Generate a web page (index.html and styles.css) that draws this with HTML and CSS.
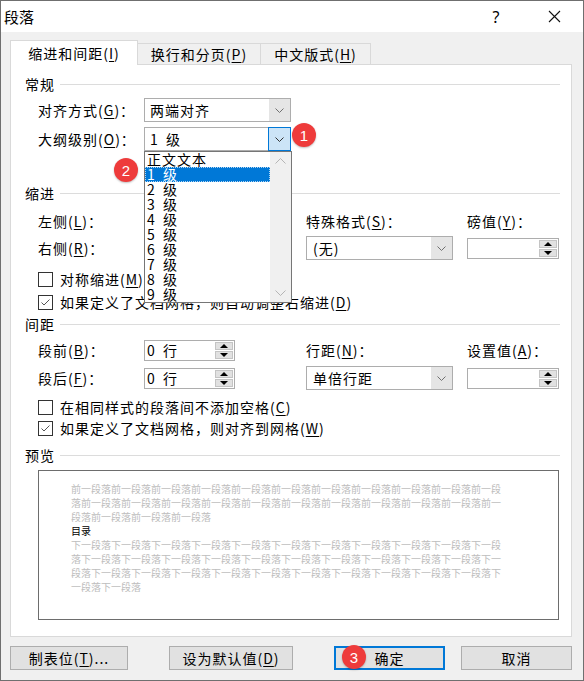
FILE: index.html
```html
<!DOCTYPE html>
<html lang="zh-CN">
<head>
  <meta charset="UTF-8" />
  <meta name="viewport" content="width=device-width, initial-scale=1.0"/>
  <title>段落</title>
  <link rel="stylesheet" href="styles.css">
</head>
<body>

  <div class="dialog">
    <div class="titlebar">
      <span class="title">段落</span>
      <span class="caption-btn help">?</span>
      <span class="caption-btn">
        <svg width="13" height="13" viewBox="0 0 13 13"><path d="M1 1L12 12M12 1L1 12" stroke="#111" stroke-width="1.1" fill="none"/></svg>
      </span>
    </div>

    <div class="tabs">
      <div class="tab tab-active tab-indent">缩进和间距(<u>I</u>)</div>
      <div class="tab tab-break">换行和分页(<u>P</u>)</div>
      <div class="tab tab-cjk">中文版式(<u>H</u>)</div>
    </div>

    <div class="panel">
      <!-- 常规 -->
      <div class="heading">常规</div>
      <div class="row row-first">
        <span class="label">对齐方式(<u>G</u>)：</span>
        <div class="select">
          <span class="select-value">两端对齐</span>
          <span class="select-btn"><svg width="9" height="5" viewBox="0 0 9 5"><path d="M0.5 0.5L4.5 4.5L8.5 0.5" stroke="#707070" fill="none"/></svg></span>
        </div>
      </div>
      <div class="row row-outline">
        <span class="label">大纲级别(<u>O</u>)：</span>
        <div class="select select-open">
          <span class="select-value"><span class="num">1</span>级</span>
          <span class="select-btn"><svg width="9" height="5" viewBox="0 0 9 5"><path d="M0.5 0.5L4.5 4.5L8.5 0.5" stroke="#333" fill="none"/></svg></span>
          <span class="badge badge-one">1</span>
          <span class="badge badge-two">2</span>
          <div class="listbox">
            <div class="list-items">
              <div class="list-item">正文文本</div>
              <div class="list-item selected"><span class="num">1</span>级</div>
              <div class="list-item"><span class="num">2</span>级</div>
              <div class="list-item"><span class="num">3</span>级</div>
              <div class="list-item"><span class="num">4</span>级</div>
              <div class="list-item"><span class="num">5</span>级</div>
              <div class="list-item"><span class="num">6</span>级</div>
              <div class="list-item"><span class="num">7</span>级</div>
              <div class="list-item"><span class="num">8</span>级</div>
              <div class="list-item"><span class="num">9</span>级</div>
            </div>
            <div class="list-scroll">
              <svg width="11" height="6" viewBox="0 0 11 6"><path d="M0.5 5.5L5.5 0.5L10.5 5.5" stroke="#b5b5b5" fill="none"/></svg>
              <svg width="11" height="6" viewBox="0 0 11 6"><path d="M0.5 0.5L5.5 5.5L10.5 0.5" stroke="#b5b5b5" fill="none"/></svg>
            </div>
          </div>
        </div>
      </div>

      <!-- 缩进 -->
      <div class="heading heading-indent">缩进</div>
      <div class="row row-left">
        <span class="label">左侧(<u>L</u>)：</span>
        <div class="spin spin-small">
          <span class="spin-value"></span>
          <span class="spin-btns"><span class="spin-up"></span><span class="spin-down"></span></span>
        </div>
        <span class="label label-right">特殊格式(<u>S</u>)：</span>
        <span class="label label-right">磅值(<u>Y</u>)：</span>
      </div>
      <div class="row row-right">
        <span class="label">右侧(<u>R</u>)：</span>
        <div class="spin spin-small">
          <span class="spin-value"></span>
          <span class="spin-btns"><span class="spin-up"></span><span class="spin-down"></span></span>
        </div>
        <div class="select select-wide">
          <span class="select-value select-value-pad">(无)</span>
          <span class="select-btn"><svg width="9" height="5" viewBox="0 0 9 5"><path d="M0.5 0.5L4.5 4.5L8.5 0.5" stroke="#707070" fill="none"/></svg></span>
        </div>
        <div class="spin spin-wide">
          <span class="spin-value"></span>
          <span class="spin-btns"><span class="spin-up"></span><span class="spin-down"></span></span>
        </div>
      </div>
      <div class="check-row check-mirror">
        <span class="checkbox"></span>
        <span>对称缩进(<u>M</u>)</span>
      </div>
      <div class="check-row check-grid">
        <span class="checkbox"><svg width="13" height="13" viewBox="0 0 13 13"><path d="M2.5 6.5L5 9L10.5 3.5" stroke="#555" fill="none"/></svg></span>
        <span>如果定义了文档网格，则自动调整右缩进(<u>D</u>)</span>
      </div>

      <!-- 间距 -->
      <div class="heading heading-spacing">间距</div>
      <div class="row row-before">
        <span class="label">段前(<u>B</u>)：</span>
        <div class="spin spin-small">
          <span class="spin-value"><span class="num">0</span>行</span>
          <span class="spin-btns"><span class="spin-up"></span><span class="spin-down"></span></span>
        </div>
        <span class="label label-right">行距(<u>N</u>)：</span>
        <span class="label label-right">设置值(<u>A</u>)：</span>
      </div>
      <div class="row row-after">
        <span class="label">段后(<u>F</u>)：</span>
        <div class="spin spin-small">
          <span class="spin-value"><span class="num">0</span>行</span>
          <span class="spin-btns"><span class="spin-up"></span><span class="spin-down"></span></span>
        </div>
        <div class="select select-wide">
          <span class="select-value select-value-pad">单倍行距</span>
          <span class="select-btn"><svg width="9" height="5" viewBox="0 0 9 5"><path d="M0.5 0.5L4.5 4.5L8.5 0.5" stroke="#707070" fill="none"/></svg></span>
        </div>
        <div class="spin spin-wide">
          <span class="spin-value"></span>
          <span class="spin-btns"><span class="spin-up"></span><span class="spin-down"></span></span>
        </div>
      </div>
      <div class="check-row check-same">
        <span class="checkbox"></span>
        <span>在相同样式的段落间不添加空格(<u>C</u>)</span>
      </div>
      <div class="check-row check-snap">
        <span class="checkbox"><svg width="13" height="13" viewBox="0 0 13 13"><path d="M2.5 6.5L5 9L10.5 3.5" stroke="#555" fill="none"/></svg></span>
        <span>如果定义了文档网格，则对齐到网格(<u>W</u>)</span>
      </div>

      <!-- 预览 -->
      <div class="heading heading-preview">预览</div>
      <div class="preview">
        <div class="preview-text">
          <p class="preview-other">前一段落前一段落前一段落前一段落前一段落前一段落前一段落前一段落前一段落前一段落前一段落前一段落前一段落前一段落前一段落前一段落前一段落前一段落前一段落前一段落前一段落前一段落前一段落前一段落前一段落</p>
          <p class="preview-current">目录</p>
          <p class="preview-other">下一段落下一段落下一段落下一段落下一段落下一段落下一段落下一段落下一段落下一段落下一段落下一段落下一段落下一段落下一段落下一段落下一段落下一段落下一段落下一段落下一段落下一段落下一段落下一段落下一段落下一段落下一段落下一段落下一段落下一段落下一段落下一段落下一段落下一段落</p>
        </div>
      </div>
    </div>

    <div class="buttons">
      <div class="btn btn-tabs">制表位(<u>T</u>)...</div>
      <div class="btn btn-default">设为默认值(<u>D</u>)</div>
      <div class="btn btn-ok">确定<span class="badge badge-three">3</span></div>
      <div class="btn btn-cancel">取消</div>
    </div>
  </div>

</body>
</html>
```

FILE: styles.css
```css
* {
  box-sizing: border-box;
}

body {
  margin: 0;
  background: #fff;
  font-family: "Noto Sans CJK SC", "Noto Sans", sans-serif;
  font-size: 14px;
  letter-spacing: 1px;
  color: #000;
}

u {
  text-decoration: underline;
  text-underline-offset: 2px;
}

.dialog {
  width: 584px;
  height: 681px;
  border: 1px solid #6f6f6f;
  background: #f0f0f0;
}

/* title bar */
.titlebar {
  height: 31px;
  background: #fff;
  display: flex;
  align-items: center;
  padding-left: 3px;
}

.title {
  flex: 1;
  font-size: 15px;
  letter-spacing: 0;
}

.caption-btn {
  width: 58px;
  height: 31px;
  display: flex;
  align-items: center;
  justify-content: center;
}

.help {
  font-family: "Noto Sans", sans-serif;
  font-size: 16px;
  letter-spacing: 0;
}

/* tabs */
.tabs {
  height: 32px;
  display: flex;
  align-items: flex-end;
  padding-left: 9px;
}

.tab {
  height: 21px;
  border: 1px solid #d9d9d9;
  border-bottom: none;
  background: #f0f0f0;
  display: flex;
  align-items: center;
  justify-content: center;
  margin-left: -1px;
}

.tab-active {
  height: 25px;
  margin-left: 0;
  margin-bottom: -1px;
  background: #fff;
  position: relative;
  z-index: 1;
}

.tab-indent { width: 128px; }
.tab-break { width: 124px; }
.tab-cjk { width: 111px; }

/* panel */
.panel {
  position: relative;
  width: 562px;
  height: 573px;
  margin-left: 9px;
  background: #fff;
  border: 1px solid #d9d9d9;
  padding: 9px 11px 0 14px;
}

.heading {
  display: flex;
  align-items: center;
  height: 20px;
}

.heading::after {
  content: "";
  flex: 1;
  height: 1px;
  margin-left: 5px;
  background: #dcdcdc;
}

.heading-indent { margin-top: 32px; }
.heading-spacing { margin-top: 3px; }
.heading-preview { margin-top: 8px; }

.row {
  display: grid;
  grid-template-columns: 106px 162px 161px 92px;
  align-items: center;
  height: 24px;
  padding-left: 13px;
}

.row-first { margin-top: 4px; }
.row-outline { margin-top: 5px; }
.row-left { margin-top: 6px; }
.row-right { margin-top: 3px; }
.row-before { margin-top: 4px; }
.row-after { margin-top: 4px; }

.label {
  white-space: nowrap;
}

.num {
  display: inline-block;
  width: 16px;
  letter-spacing: 0;
}

/* combo boxes */
.select {
  position: relative;
  width: 147px;
  height: 24px;
  border: 1px solid #adadad;
  background: #fff;
  display: flex;
  align-items: center;
}

.select-value {
  flex: 1;
  padding-left: 5px;
  white-space: nowrap;
}

.select-value-pad {
  padding-left: 6px;
}

.select-btn {
  width: 21px;
  height: 100%;
  background: #e5e5e5;
  display: flex;
  align-items: center;
  justify-content: center;
}

.select-open .select-btn {
  background: #cce4f7;
  box-shadow: 0 0 0 1px #0078d7;
}

.listbox {
  position: absolute;
  top: calc(100% + 1px);
  left: -1px;
  width: 148px;
  height: 152px;
  border: 1px solid #767676;
  background: #fff;
  display: flex;
  z-index: 5;
}

.list-items {
  flex: 1;
}

.list-item {
  height: 15px;
  line-height: 15px;
  padding-left: 2px;
  white-space: nowrap;
}

.list-item.selected {
  background: #0078d7;
  color: #fff;
  outline: 1px dotted rgba(255, 255, 255, 0.7);
  outline-offset: -1px;
}

.list-scroll {
  width: 21px;
  background: #f0f0f0;
  display: flex;
  flex-direction: column;
  justify-content: space-between;
  align-items: center;
  padding: 6px 0 6px;
}

/* spin boxes */
.spin {
  height: 21px;
  border: 1px solid #adadad;
  background: #fff;
  display: flex;
}

.spin-small { width: 91px; }
.spin-wide { width: 92px; }

.spin-value {
  flex: 1;
  padding-left: 2px;
  line-height: 19px;
  white-space: nowrap;
}

.spin-btns {
  width: 19px;
  display: flex;
  flex-direction: column;
  padding: 1px 1px 1px 0;
  gap: 1px;
}

.spin-up,
.spin-down {
  flex: 1;
  background: #e1e1e1;
  border: 1px solid #c4c4c4;
  position: relative;
}

.spin-up::after,
.spin-down::after {
  content: "";
  position: absolute;
  left: 50%;
  top: 50%;
  margin-left: -4px;
  border-left: 4px solid transparent;
  border-right: 4px solid transparent;
}

.spin-up::after {
  margin-top: -2px;
  border-bottom: 4px solid #000;
}

.spin-down::after {
  margin-top: -2px;
  border-top: 4px solid #000;
}

/* check boxes */
.check-row {
  display: flex;
  align-items: center;
  height: 18px;
  padding-left: 13px;
  white-space: nowrap;
}

.check-mirror { margin-top: 10px; }
.check-grid { margin-top: 5px; }
.check-same { margin-top: 8px; }
.check-snap { margin-top: 3px; }

.checkbox {
  width: 15px;
  height: 15px;
  border: 1px solid #333;
  background: #fff;
  margin-right: 7px;
  display: flex;
}

/* preview */
.preview {
  width: 521px;
  height: 150px;
  margin: 5px 0 0 13px;
  border: 1px solid #6d6d6d;
  background: #fff;
  padding: 11px 0 0 32px;
}

.preview-text {
  width: 430px;
  font-size: 10px;
  line-height: 14px;
  letter-spacing: 0;
}

.preview-text p {
  margin: 0;
}

.preview-other {
  color: #bdbdbd;
}

.preview-current {
  color: #000;
}

/* bottom buttons */
.buttons {
  display: flex;
  padding: 9px 0 0 9px;
}

.btn {
  position: relative;
  height: 24px;
  background: #e1e1e1;
  border: 1px solid #adadad;
  display: flex;
  align-items: center;
  justify-content: center;
  white-space: nowrap;
}

.btn-tabs { width: 118px; margin-right: 41px; }
.btn-default { width: 124px; margin-right: 41px; }
.btn-ok { width: 111px; margin-right: 16px; border: 2px solid #0078d7; }
.btn-cancel { width: 111px; }

/* numbered callouts */
.badge {
  position: absolute;
  width: 24px;
  height: 24px;
  border-radius: 50%;
  background: #ee3b3b;
  color: #fff;
  font-family: "Liberation Sans", Arial, sans-serif;
  font-size: 15px;
  letter-spacing: 0;
  display: flex;
  align-items: center;
  justify-content: center;
  box-shadow: 0 1px 2px rgba(0, 0, 0, 0.25);
  z-index: 10;
}

.badge-one { left: 147px; top: -5px; }
.badge-two { left: -31px; top: 30px; }
.badge-three { left: 6px; top: -3px; }
```
